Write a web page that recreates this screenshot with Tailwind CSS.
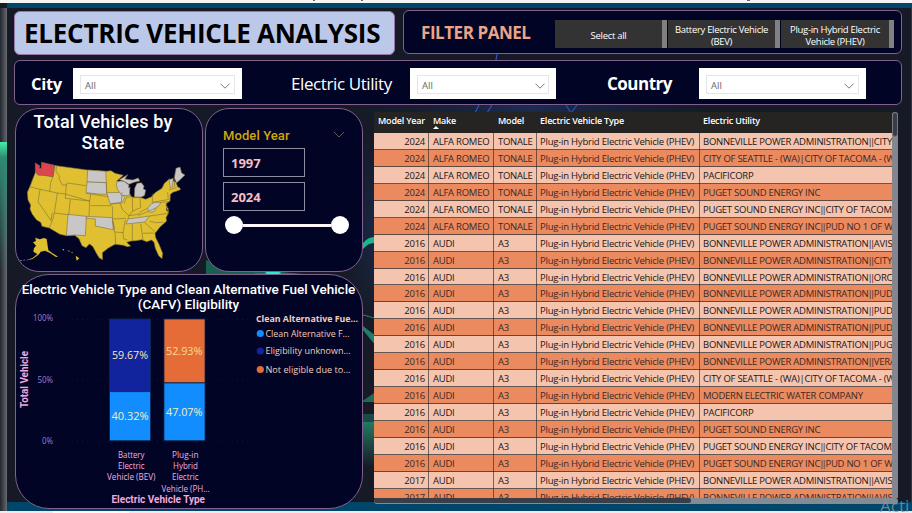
<!DOCTYPE html>
<html lang="en">
<head>
<meta charset="utf-8">
<title>Electric Vehicle Analysis</title>
<script src="https://cdn.jsdelivr.net/npm/@tailwindcss/browser@4"></script>
</head>
<body class="relative w-[912px] h-[513px] overflow-hidden bg-[#161a26] font-['Open_Sans','Noto_Sans',sans-serif]">
<!-- backdrop -->
<svg class="absolute inset-0 -z-0" width="912" height="513" viewBox="0 0 912 513">
  <defs>
    <linearGradient id="edge" x1="0" x2="1" y1="0" y2="0"><stop offset="0" stop-color="#22262f"/><stop offset=".6" stop-color="#4a4d55"/><stop offset="1" stop-color="#6a6b70"/></linearGradient>
    <linearGradient id="green" x1="0" x2="0" y1="0" y2="1"><stop offset="0" stop-color="#43eda9"/><stop offset=".12" stop-color="#2f8a72"/><stop offset="1" stop-color="#2f8a72" stop-opacity="0"/></linearGradient>
    <linearGradient id="teal" x1="0" x2="0" y1="0" y2="1"><stop offset="0" stop-color="#217a62"/><stop offset="1" stop-color="#161a26"/></linearGradient>
    <radialGradient id="blue"><stop offset="0" stop-color="#1d3a75"/><stop offset="1" stop-color="#161a26" stop-opacity="0"/></radialGradient>
  </defs>
  <rect width="912" height="513" fill="#161a26"/>
  <ellipse cx="400" cy="230" rx="70" ry="130" fill="url(#blue)"/>
  <ellipse cx="530" cy="108" rx="220" ry="30" fill="url(#blue)" opacity=".6"/>
  <path d="M475 113l4-8M492 105l-5 8M566 105l5 8M577 105l-6 8M497 54l-1 6" stroke="#2855b8" stroke-width="1.2"/>
  <path d="M363 243q5-6 11-6v6q-6 0-11 6z" fill="#17b98c"/>
  <path d="M206 260v14h70l-40-4z" fill="#17614f"/>
  <path d="M255 273q18-2 36 0l40 3h-76z" fill="#17806a"/>
  <ellipse cx="273" cy="273" rx="8" ry="1.5" fill="#20f0d0"/>
  <path d="M357 314q9 1 17 4M361 327l13 16v-8l-13-10z" stroke="#1d8068" fill="#1d8068"/>
  <path d="M361 402l13-9v9z" fill="#1d6a58"/>
  <rect x="361" y="414" width="13" height="8" fill="#1a4a47"/><rect x="361" y="422" width="13" height="45" fill="url(#teal)"/>
  <rect x="0" y="8" width="7" height="503" fill="url(#edge)"/>
  <rect x="0" y="142" width="7" height="130" fill="url(#green)"/>
  <rect x="0" y="0" width="912" height="3" fill="#f5f5f5"/>
  <path d="M313 0h2v1h-2zM361 0h2v1h-2zM747 0h3v1h-3z" fill="#667"/>
  <rect x="7" y="3" width="905" height="5" fill="#00466a"/>
  <rect x="7" y="502" width="905" height="9" fill="#00466a"/>
  <rect x="0" y="511" width="912" height="2" fill="#ececec"/>
  <rect x="53" y="511" width="76" height="2" fill="#fff"/>
  <rect x="911" y="8" width="1" height="494" fill="#33373f"/>
</svg>

<main class="relative pl-[14px] pt-[10px] w-[902px]">
  <header class="flex">
    <h1 class="mt-px w-[381px] h-[44px] rounded-[6px] border border-[#9878aa] bg-[#bcc8ea] text-black font-bold text-[26px] leading-[43px] pl-[9px] whitespace-nowrap tracking-[-0.24px]">ELECTRIC VEHICLE ANALYSIS</h1>
    <section class="ml-[8px] w-[499px] h-[44px] rounded-[6px] border border-[#80608f] bg-[#020426] flex items-start">
      <h2 class="w-[151px] pl-[17px] text-[#eba488] font-bold text-[17px] leading-[44px] whitespace-nowrap tracking-[-0.45px]">FILTER PANEL</h2>
      <div class="mt-[9px] flex gap-px text-white text-[9.5px] leading-[12px] text-center font-medium tracking-[-0.3px]">
        <div class="w-[112px] h-[28px] bg-[#333] border-r-[5px] border-[#808080] flex items-center justify-center pt-[4px]">Select all</div>
        <div class="w-[112px] h-[28px] bg-[#333] border-r-[5px] border-[#808080] flex items-center justify-center pt-[3px] whitespace-nowrap">Battery Electric Vehicle<br>(BEV)</div>
        <div class="w-[113px] h-[28px] bg-[#333] border-r-[5px] border-[#808080] flex items-center justify-center pt-[3px] whitespace-nowrap">Plug-in Hybrid Electric<br>Vehicle (PHEV)</div>
      </div>
    </section>
  </header>

  <section class="mt-[5px] w-[888px] h-[45px] rounded-[6px] border border-[#80608f] bg-[#020426] flex text-white leading-[45px] whitespace-nowrap">
    <label class="w-[58px] pl-[16px] font-bold text-[16.5px] tracking-[-0.3px]">City</label>
    <div class="mt-[7px] w-[169px] h-[31px] bg-white p-[7px]"><div class="h-[19px] w-[155px] border border-[#e6e6e6] flex items-center justify-between pl-[4px] pr-[4px] pt-[2px] text-[9.5px] text-[#666]">All<svg width="10" height="6" viewBox="0 0 10 6" fill="none" stroke="#777"><path d="M.5 .7L5 5.200L9.500 .7"/></svg></div></div>
    <label class="w-[168px] pl-[49px] text-[17px] tracking-[-0.4px]">Electric Utility</label>
    <div class="mt-[7px] w-[146px] h-[31px] bg-white p-[7px]"><div class="h-[19px] w-[132px] border border-[#e6e6e6] flex items-center justify-between pl-[4px] pr-[3px] pt-[2px] text-[9.5px] text-[#666]">All<svg width="10" height="6" viewBox="0 0 10 6" fill="none" stroke="#777"><path d="M.5 .7L5 5.200L9.500 .7"/></svg></div></div>
    <label class="w-[143px] pl-[51px] font-bold text-[17px] tracking-[-0.5px]">Country</label>
    <div class="mt-[7px] w-[167px] h-[31px] bg-white p-[7px]"><div class="h-[19px] w-[153px] border border-[#e6e6e6] flex items-center justify-between pl-[4px] pr-[4px] pt-[2px] text-[9.5px] text-[#666]">All<svg width="10" height="6" viewBox="0 0 10 6" fill="none" stroke="#777"><path d="M.5 .7L5 5.200L9.500 .7"/></svg></div></div>
  </section>

  <div class="flex pl-px mt-[3px]">
    <div class="w-[348px] shrink-0">
      <div class="flex gap-[2px]">
        <!-- map card -->
        <section class="w-[188px] h-[164px] rounded-[24px] border border-[#80608f] bg-[#020426] relative overflow-hidden">
          <h2 class="pt-[2px] pr-[12px] text-center text-white font-medium text-[18px] leading-[21px] font-[Roboto,sans-serif] tracking-[0.15px]">Total Vehicles by<br>State</h2>
          <svg class="absolute left-0 top-0" width="186" height="162" viewBox="48 12 558 486">
            <g stroke="#7d7138" stroke-width="1.8" stroke-linejoin="round" fill="#e0c030">
              <path d="M107 200L101 215L90 244L82 262L84 285L92 300L90 312L97 328L110 345L122 352L126 364L148 369L180 388L200 392L224 391L237 401L246 422L258 428L268 417L278 424L290 446L298 459L308 464L307 443L325 429L345 418L370 421L382 425L392 423L380 412L393 408L408 407L425 404L440 410L455 405L462 412L466 430L476 452L486 461L488 445L477 418L467 398L465 385L480 366L500 348L498 338L505 325L505 312L498 296L510 288L511 268L519 262L533 257L541 254L540 249L533 246L528 232L508 222L493 235L486 250L465 263L455 275L437 283L420 277L398 277L392 272L380 240L350 228L370 211L345 205L333 197L318 199L262 195L168 182L164 181L159 215L133 211L114 210Z"/>
              <path d="M106 398L119 403L132 399L140 402L145 436L160 446L174 455L168 456L150 444L135 437L122 440L117 448L98 462L78 466L98 459L112 447L100 440L102 430L108 422L99 412L108 408Z" stroke-width=".6"/>
              <path d="M187 432l6 1-3 4zM203 436l7 2-3 2zM213 441l7 2-4 2zM227 452l11 8-8 7z" stroke="none"/>
              <path d="M58 466l8 1M70 466l5-1" stroke="#aaa"/>
              <path d="M106 174L120 183L117 190L124 190L125 172L164 181L159 215L133 211L114 210L106 200Z" fill="#dc4450"/>
              <g fill="#c8c6c6">
                <path d="M263 195L317 199L319 233L261 231Z"/>
                <path d="M261 231L319 233L320 268L298 267L258 263Z"/>
                <path d="M320 263L365 262L374 278L366 293L330 296L325 280Z"/>
                <path d="M204 328L259 334L256 392L222 390L199 392Z"/>
                <path d="M259 334L337 338L340 374L315 369L286 363L286 342L260 340Z"/>
                <path d="M384 342L449 333L434 351L378 357Z"/>
                <path d="M443 309L455 296L465 292L483 292L477 302L469 307L462 320L450 322L445 318Z"/>
                <path d="M351 230L361 228L372 229L387 240L385 248L390 246L388 271L366 272L352 252L349 239Z"/>
                <path d="M358 224L383 209L375 222L398 225L415 219L419 228L402 232L387 238L372 229Z"/>
                <path d="M403 276L404 250L411 235L424 233L432 243L430 252L437 255L434 271L425 276Z"/>
                <path d="M507 224L520 220L517 246L511 248Z"/>
                <path d="M523 218L528 190L540 186L545 204L555 210L534 230L529 233Z"/>
              </g>
              <path fill="none" d="M89 245L120 253L172 264L195 267L269 288M159 215L152 233L149 260M169 182L168 200L179 214L177 220L187 240L199 240L202 234L258 242M199 236L196 280L269 288L272 266M120 254L114 290L153 347L157 323M172 264L163 324L206 329L211 284M163 324L157 347L148 369M269 288L267 333M258 265L325 275M272 302L335 302M337 304L338 342L378 340M337 344L343 381L370 383M345 382L347 418M344 374L340 350M376 345L369 384L371 402L382 405M397 357L397 407M422 356L429 405M429 385L461 384M434 352L464 380M449 349L470 353L489 352M449 333L505 325M360 295L368 315L387 332L384 342M372 296L380 276L395 276M397 278L398 318L387 332L415 328L422 320L442 310M420 278L422 308M398 318L422 308M457 266L457 292L503 284M415 331L443 320L469 308M484 292L506 290M503 262L505 285M506 254L530 248M523 221L524 246M366 262L364 293L330 298M319 233L320 263"/>
              <path fill="none" stroke="#020426" d="M498 300l4 6-3 6 4 8M505 314l-6 2"/>
            </g>
          </svg>
        </section>
        <!-- year slicer -->
        <section class="w-[158px] h-[164px] rounded-[24px] border border-[#80608f] bg-[#020426] pl-[17px] pt-[17px]">
          <div class="flex justify-between items-center h-[20px] pr-[17px]">
            <h3 class="text-[#cfa70a] font-medium text-[13px] leading-[20px] font-[Roboto,sans-serif] tracking-[0.1px]">Model Year</h3>
            <svg class="-mt-[3px]" width="12" height="7" viewBox="0 0 12 7" fill="none" stroke="#665d59"><path d="M1 1L6 6L11 1"/></svg>
          </div>
          <div class="mt-[2px] w-[82px] h-[29px] border border-[#8d8e9e] pl-[7px] text-[#f5bfc6] font-bold text-[13px] leading-[28px] tracking-[0px]">1997</div>
          <div class="mt-[5px] w-[82px] h-[29px] border border-[#8d8e9e] pl-[7px] text-[#f5bfc6] font-bold text-[13px] leading-[29px] tracking-[0px]">2024</div>
          <div class="mt-[5px] ml-[2px] w-[124px] flex items-center">
            <span class="size-[18px] rounded-full bg-white"></span><span class="h-[3px] flex-1 bg-[#fff4f6]"></span><span class="size-[18px] rounded-full bg-white"></span>
          </div>
        </section>
      </div>
      <!-- stacked chart -->
      <section class="mt-[2px] w-[348px] h-[235px] rounded-[34px] border border-[#80608f] bg-[#020426] flex flex-col">
        <h2 class="h-[38px] pt-[7px] -mr-px -ml-[2px] text-center text-white font-medium text-[13.5px] leading-[15px] font-[Roboto,sans-serif] whitespace-nowrap tracking-[0px]">Electric Vehicle Type and Clean Alternative Fuel Vehicle<br>(CAFV) Eligibility</h2>
        <svg width="346" height="195" viewBox="16 313 346 195">
          <g stroke="#101230" stroke-dasharray="1 4"><path d="M62 319.500H256M62 380.500H256M62 441.500H256"/></g>
          <g stroke="#0b2b52" stroke-width=".8">
            <rect x="109.600" y="319" width="41" height="72.500" fill="#12239e"/><rect x="109.600" y="391.700" width="41" height="49" fill="#118dff"/>
            <rect x="164" y="319" width="41" height="63.800" fill="#e66c37"/><rect x="164" y="383" width="41" height="57.700" fill="#118dff"/>
          </g>
          <g font-size="11.500" fill="#f5edb5">
            <text x="112" y="359.300" textLength="36" lengthAdjust="spacingAndGlyphs">59.67%</text>
            <text x="111.500" y="420" textLength="37" lengthAdjust="spacingAndGlyphs">40.32%</text>
            <text x="166" y="355.300" textLength="36.500" fill="#f8dc8c" lengthAdjust="spacingAndGlyphs">52.93%</text>
            <text x="166" y="416" textLength="36.500" lengthAdjust="spacingAndGlyphs">47.07%</text>
          </g>
          <g font-size="8.500" fill="#a779c8">
            <text x="33" y="321.300" textLength="20" lengthAdjust="spacingAndGlyphs">100%</text>
            <text x="37.500" y="383" textLength="15.500" lengthAdjust="spacingAndGlyphs">50%</text>
            <text x="42" y="444" textLength="11" lengthAdjust="spacingAndGlyphs">0%</text>
          </g>
          <g font-size="8.600" fill="#f0aee0">
            <text x="118" y="458.300" textLength="26.500" lengthAdjust="spacingAndGlyphs">Battery</text>
            <text x="118" y="469.300" textLength="26.500" lengthAdjust="spacingAndGlyphs">Electric</text>
            <text x="107" y="480.300" textLength="48.500" lengthAdjust="spacingAndGlyphs">Vehicle (BEV)</text>
            <text x="172" y="458.300" textLength="26.500" lengthAdjust="spacingAndGlyphs">Plug-in</text>
            <text x="173" y="469.300" textLength="25" lengthAdjust="spacingAndGlyphs">Hybrid</text>
            <text x="172" y="480.300" textLength="26.500" lengthAdjust="spacingAndGlyphs">Electric</text>
            <text x="161.500" y="492.300" textLength="48" lengthAdjust="spacingAndGlyphs">Vehicle (PH...</text>
          </g>
          <text x="111.500" y="503" font-size="10" font-weight="700" font-family="Roboto" fill="#f3a8dc" textLength="93.500" lengthAdjust="spacingAndGlyphs">Electric Vehicle Type</text>
          <text transform="translate(27.500 408) rotate(-90)" font-size="10" font-weight="700" font-family="Roboto" fill="#f3a8dc" textLength="57" lengthAdjust="spacingAndGlyphs">Total Vehicle</text>
          <g font-size="9.800" fill="#f4cdbd">
            <text x="256" y="321.700" font-size="9.300" font-weight="700" textLength="102" lengthAdjust="spacingAndGlyphs">Clean Alternative Fue...</text>
            <text x="265.500" y="337" textLength="84" lengthAdjust="spacingAndGlyphs">Clean Alternative F...</text>
            <text x="265.500" y="354" textLength="85" lengthAdjust="spacingAndGlyphs">Eligibility unknown...</text>
            <text x="265.500" y="373" textLength="85" lengthAdjust="spacingAndGlyphs">Not eligible due to...</text>
          </g>
          <circle cx="260.300" cy="333.500" r="3.600" fill="#118dff"/><circle cx="260.300" cy="351" r="3.600" fill="#12239e"/><circle cx="260.300" cy="369.500" r="3.600" fill="#e66c37"/>
        </svg>
      </section>
    </div>

    <!-- table -->
    <section class="ml-[11px] mt-[4px] w-[524px] h-[392px] flex flex-col text-[9.500px]">
      <div class="flex h-[386px]">
        <div class="w-[518px] h-[386px] overflow-hidden">
          <div class="grid grid-cols-[55px_65px_43px_163px_192px] h-[21px] bg-[#252423] text-white font-semibold leading-[18px] whitespace-nowrap text-[9px] tracking-[-0.2px]">
            <span class="pl-[4px]">Model Year</span><span class="pl-[4px] relative">Make<i class="absolute left-[4px] top-[14px] border-x-[3px] border-x-transparent border-b-[3px] border-b-white"></i></span><span class="pl-[4px]">Model</span><span class="pl-[3px]">Electric Vehicle Type</span><span class="pl-[3px]">Electric Utility</span>
          </div>
          <div id="rows"></div>
        </div>
        <div class="w-[6px] bg-[#85868d] rounded-t-[3px]"><div class="w-[6px] h-[25px] rounded-[3px] bg-[#3a3c46] border border-[#777880]"></div></div>
      </div>
      <div class="h-[6px] w-[524px] bg-[#858b93] rounded-[3px]"><div class="h-[5px] w-[317px] rounded-[3px] bg-[#3a3e46]"></div></div>
    </section>
  </div>
</main>
<div class="absolute left-[880px] top-[494px] w-[32px] h-[19px] text-[17px] leading-[23px] text-[#8c959e]/80">Acti</div>

<script>
const utilities = [
 'BONNEVILLE POWER ADMINISTRATION||CITY','CITY OF SEATTLE - (WA)|CITY OF TACOMA - (W','PACIFICORP','PUGET SOUND ENERGY INC','PUGET SOUND ENERGY INC||CITY OF TACOMA','PUGET SOUND ENERGY INC||PUD NO 1 OF W',
 'BONNEVILLE POWER ADMINISTRATION||AVIS','BONNEVILLE POWER ADMINISTRATION||CITY','BONNEVILLE POWER ADMINISTRATION||ORC','BONNEVILLE POWER ADMINISTRATION||PUD','BONNEVILLE POWER ADMINISTRATION||PUD','BONNEVILLE POWER ADMINISTRATION||PUD','BONNEVILLE POWER ADMINISTRATION||PUG','BONNEVILLE POWER ADMINISTRATION||VERA',
 'CITY OF SEATTLE - (WA)|CITY OF TACOMA - (W','MODERN ELECTRIC WATER COMPANY','PACIFICORP','PUGET SOUND ENERGY INC','PUGET SOUND ENERGY INC||CITY OF TACOMA','PUGET SOUND ENERGY INC||PUD NO 1 OF W','BONNEVILLE POWER ADMINISTRATION||AVIS','BONNEVILLE POWER ADMINISTRATION||AVIS'];
const cell = 'border-l border-[#222]/60 overflow-hidden';
document.getElementById('rows').innerHTML = utilities.map((u, i) => {
  const alfa = i < 6, year = alfa ? 2024 : i < 20 ? 2016 : 2017;
  const tone = i % 2 ? 'bg-[#eb895f] text-[#3a2a25]' : 'bg-[#f5c4af] text-[#1c1614]';
  const name = u.replace('||', '<span class="-ml-[1px] tracking-[-2.8px]">||</span><span class="ml-[1.5px]"></span>');
  return `<div class="grid grid-cols-[54px_65px_43px_163px_193px] h-[16.950px] border-b border-[#333]/75 leading-[17px] whitespace-nowrap tracking-[-0.25px] ${tone}">
    <span class="text-right pr-[3px]">${year}</span><span class="${cell} pl-[4px]">${alfa ? 'ALFA ROMEO' : 'AUDI'}</span><span class="${cell} pl-[4px]">${alfa ? 'TONALE' : 'A3'}</span><span class="${cell} pl-[3px] tracking-[-0.22px]">Plug-in Hybrid Electric Vehicle (PHEV)</span><span class="${cell} pl-[3px]">${name}</span></div>`;
}).join('');
</script>
</body>
</html>
